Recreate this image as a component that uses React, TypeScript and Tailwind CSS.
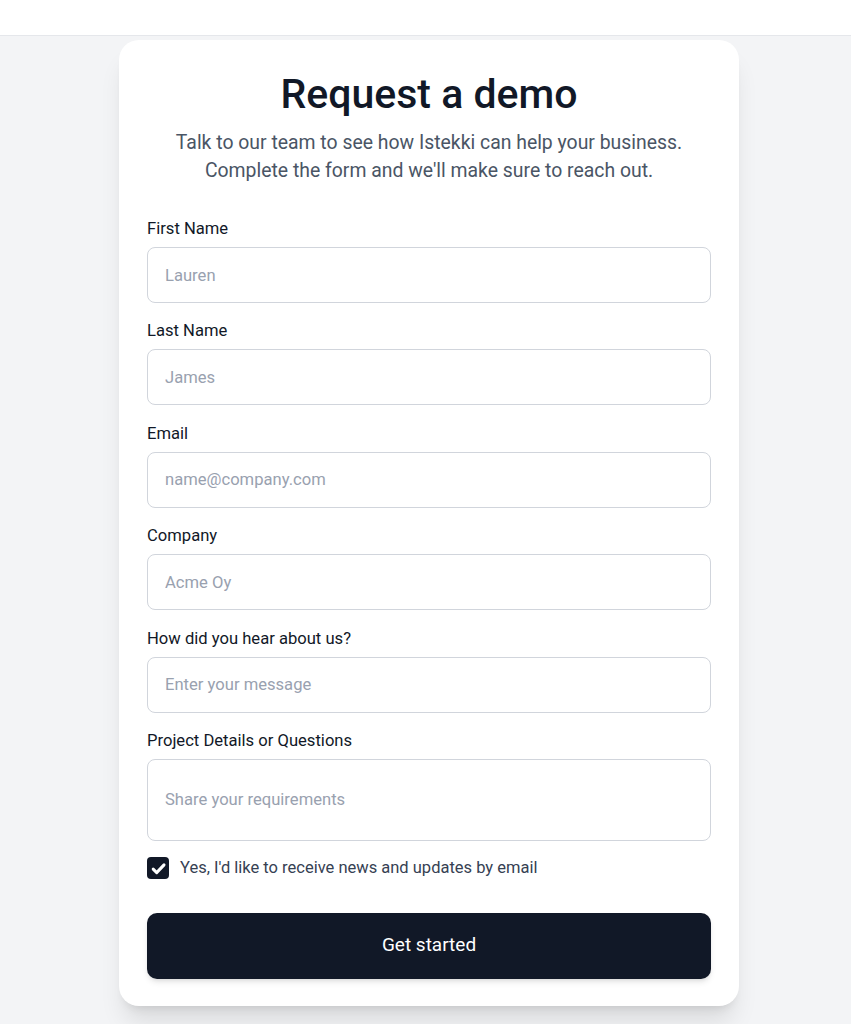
import { useState } from 'react';

const fields = [
  { label: 'First Name', placeholder: 'Lauren', type: 'text' },
  { label: 'Last Name', placeholder: 'James', type: 'text' },
  { label: 'Email', placeholder: 'name@company.com', type: 'email' },
  { label: 'Company', placeholder: 'Acme Oy', type: 'text' },
  { label: 'How did you hear about us?', placeholder: 'Enter your message', type: 'text' },
];

export default function App() {
  const [subscribe, setSubscribe] = useState(true);

  return (
    <div className="min-h-screen bg-[#f3f4f6] font-['Roboto',sans-serif] text-gray-900">
      <header className="h-[36px] bg-white border-b border-gray-200" />

      <main className="flex justify-center pl-[7px] pt-[4px] pb-[20px]">
        <div className="w-[620px] bg-white rounded-[20px] shadow-xl px-[28px] pt-[26px] pb-[27px]">
          <h1 className="text-center text-[41px] leading-[56px] font-medium text-[#111827]">Request a demo</h1>
          <p className="mt-[7px] text-center text-[19.4px] leading-[28px] text-gray-600">
            Talk to our team to see how Istekki can help your business.
            <br />
            Complete the form and we'll make sure to reach out.
          </p>

          <form className="mt-[32px] flex flex-col gap-[16.4px]" onSubmit={(e) => e.preventDefault()}>
            {fields.map((f) => (
              <label key={f.label} className="flex flex-col gap-[6px]">
                <span className="text-[16.6px] leading-[24px] text-[#111827]">{f.label}</span>
                <input
                  type={f.type}
                  placeholder={f.placeholder}
                  className="h-[56px] w-full rounded-lg border border-gray-300 px-[17px] text-[16.6px] placeholder:text-gray-400 outline-none"
                />
              </label>
            ))}

            <label className="flex flex-col gap-[6px]">
              <span className="text-[16.6px] leading-[24px] text-[#111827]">Project Details or Questions</span>
              <textarea
                placeholder="Share your requirements"
                className="h-[82px] w-full resize-none rounded-lg border border-gray-300 px-[17px] pt-[28px] text-[16.6px] leading-[24px] placeholder:text-gray-400 outline-none"
              />
            </label>

            <label className="mt-[-1px] flex items-center gap-[11px] cursor-pointer">
              <button
                type="button"
                onClick={() => setSubscribe(!subscribe)}
                className={`flex h-[22px] w-[22px] items-center justify-center rounded-[4px] ${
                  subscribe ? 'bg-[#111827]' : 'border border-gray-300 bg-white'
                }`}
              >
                {subscribe && (
                  <svg viewBox="0 0 16 16" className="h-[17px] w-[17px]" fill="none">
                    <path d="M3 8.6l3.3 3.3L13.2 4.6" stroke="white" strokeWidth="2.8" strokeLinecap="round" strokeLinejoin="round" />
                  </svg>
                )}
              </button>
              <span className="text-[16.5px] leading-[24px] text-gray-700">
                Yes, I'd like to receive news and updates by email
              </span>
            </label>

            <button
              type="submit"
              className="mt-[16px] h-[66px] w-full rounded-[10px] bg-[#111827] text-[19px] font-normal text-white shadow-md"
            >
              Get started
            </button>
          </form>
        </div>
      </main>
    </div>
  );
}
